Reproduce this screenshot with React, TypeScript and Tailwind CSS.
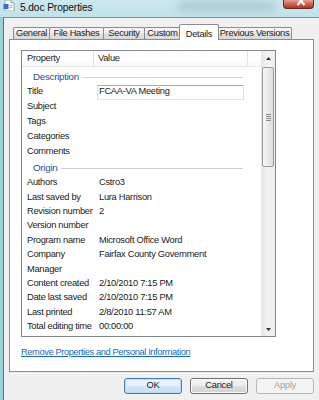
import React from "react";

const FONT = { fontFamily: '"Liberation Sans", Arial, sans-serif' };

const originRows: [string, string][] = [
  ["Authors", "Cstro3"],
  ["Last saved by", "Lura Harrison"],
  ["Revision number", "2"],
  ["Version number", ""],
  ["Program name", "Microsoft Office Word"],
  ["Company", "Fairfax County Government"],
  ["Manager", ""],
  ["Content created", "2/10/2010 7:15 PM"],
  ["Date last saved", "2/10/2010 7:15 PM"],
  ["Last printed", "2/8/2010 11:57 AM"],
  ["Total editing time", "00:00:00"],
];

const descRows = ["Subject", "Tags", "Categories", "Comments"];

function Row({ label, value, h }: { label: string; value: string; h: string }) {
  return (
    <div className={`flex items-center ${h}`}>
      <div className="w-[72px] pl-[5px] whitespace-nowrap">{label}</div>
      <div className="pl-[5px] whitespace-nowrap">{value}</div>
    </div>
  );
}

function Group({ label, cls }: { label: string; cls: string }) {
  return (
    <div className={`flex items-center ${cls}`}>
      <div className="pl-[11px] text-[#2b4c9c] text-[9.8px] whitespace-nowrap">{label}</div>
      <div className="flex-1 h-px bg-[#c9d0e2] ml-[4px] mr-[18px]" />
    </div>
  );
}

function Tab({ label, cls, selected }: { label: string; cls: string; selected?: boolean }) {
  if (selected) {
    return (
      <div
        className={`relative z-10 h-[16px] flex justify-center pt-[3px] bg-white border border-b-0 border-[#898c95] rounded-t-[2px] ${cls}`}
      >
        {label}
      </div>
    );
  }
  return (
    <div
      className={`h-[12px] mb-px flex items-center justify-center border border-b-0 border-[#898c95] rounded-t-[2px] bg-[linear-gradient(#f6f6f6,#efefef_50%,#e3e3e3_50%,#d8d8d8)] ${cls}`}
    >
      {label}
    </div>
  );
}

export default function App() {
  return (
    <div
      className="w-[319px] h-[400px] overflow-hidden flex flex-col text-[9.3px] tracking-[-0.28px] text-[#1a1a1a] bg-[#a9dbe2]"
      style={FONT}
    >
      {/* Title bar */}
      <div className="h-[17px] flex items-start bg-[linear-gradient(#cbe8ee,#bfe2e9)]">
        <svg width="12" height="11" viewBox="0 0 12 11" className="ml-[3px] mt-0">
          <path d="M2 0 H8 L11 3 V11 H2 Z" fill="#fbfbfb" stroke="#8d9aa6" strokeWidth="0.8" />
          <path d="M8 0 V3 H11" fill="#e6ecf2" stroke="#8d9aa6" strokeWidth="0.8" />
          <rect x="0.5" y="4" width="5" height="5" fill="#3b6fc4" />
          <rect x="6.5" y="5" width="3" height="0.8" fill="#9aa8b8" />
          <rect x="6.5" y="7" width="3" height="0.8" fill="#9aa8b8" />
        </svg>
        <div className="ml-[5px] mt-[2px] text-[10.2px] tracking-[-0.1px] text-[#111] leading-[11px]">
          5.doc Properties
        </div>
        <div className="flex-1 flex justify-end pr-[6px]">
          <div className="w-[100px] h-[10px] mt-[1px] rounded-full bg-[#9fb9c1] blur-[4px] opacity-60" />
        </div>
        <div className="w-[31px] h-[9px] mr-[5px] rounded-b-[4px] border border-t-0 border-[#6a241b] bg-[linear-gradient(#e6a092,#d06a59_45%,#b3331f)] flex justify-center overflow-hidden">
          <svg width="10" height="8" viewBox="0 0 10 8" className="ml-[4px]">
            <path d="M1.5 -3 L8.5 5 M8.5 -3 L1.5 5" stroke="#ffffff" strokeWidth="2" />
          </svg>
        </div>
      </div>

      {/* Frame + body */}
      <div className="flex-1 flex">
        <div className="w-[3px] bg-[#98d3dc]" />
        <div className="w-px bg-[#5d7378]" />
        <div className="flex-1 bg-[#f0f0f0] border-t border-[#7f949a] flex flex-col pt-[6px]">
          {/* Tabs */}
          <div className="relative z-10 h-[16px] flex items-end pl-[9px]">
            <Tab label="General" cls="w-[37px]" />
            <Tab label="File Hashes" cls="w-[55px] -ml-px" />
            <Tab label="Security" cls="w-[42px] -ml-px" />
            <Tab label="Custom" cls="w-[37px] -ml-px" />
            <Tab label="Details" cls="w-[40px] -ml-[2px]" selected />
            <Tab label="Previous Versions" cls="w-[75px] -ml-[2px]" />
          </div>

          {/* Panel */}
          <div className="-mt-px ml-[5px] w-[305px] h-[333px] bg-white border border-[#898c95] pt-[10px] pl-[11px] flex flex-col">
            {/* List view */}
            <div className="w-[255px] h-[287px] border border-[#828790] flex overflow-hidden">
              <div className="flex-1 flex flex-col overflow-hidden">
                {/* Header */}
                <div className="h-[16px] shrink-0 flex border-b border-[#e8e8e8] bg-[linear-gradient(#ffffff,#ffffff_60%,#f6f7f9)]">
                  <div className="w-[72px] pl-[5px] pt-[1px] flex items-center border-r border-[#e2e3e6]">Property</div>
                  <div className="w-[154px] pl-[4px] pt-[1px] flex items-center border-r border-[#e2e3e6]">Value</div>
                  <div className="flex-1" />
                </div>
                <Group label="Description" cls="h-[17px] shrink-0 pt-[3px]" />
                <div className="h-[16px] shrink-0 flex items-center">
                  <div className="w-[72px] pl-[5px]">Title</div>
                  <div className="ml-[3px] w-[147px] h-[15px] border border-[#abadb3] border-l-[#dbdfe6] border-r-[#dbdfe6] border-b-[#e3e9ef] pl-[1px] flex items-center">
                    FCAA-VA Meeting
                  </div>
                </div>
                {descRows.map((l) => (
                  <Row key={l} label={l} value="" h="h-[14.75px] shrink-0" />
                ))}
                <Group label="Origin" cls="h-[17px] shrink-0 pt-[1px]" />
                {originRows.map(([l, v]) => (
                  <Row key={l} label={l} value={v} h="h-[14.4px] shrink-0" />
                ))}
              </div>
              {/* Scrollbar */}
              <div className="w-[14px] flex flex-col bg-[linear-gradient(90deg,#e6e6e6,#f3f3f3_40%,#eeeeee)] border-l border-[#e6e6e6]">
                <div className="h-[15px] shrink-0 flex items-center justify-center">
                  <svg width="5" height="3" viewBox="0 0 5 3">
                    <path d="M0 3 L2.5 0 L5 3 Z" fill="#333" />
                  </svg>
                </div>
                <div className="h-[100px] shrink-0 mt-px mr-px rounded-[2px] border border-[#9b9b9b] bg-[linear-gradient(90deg,#f7f7f7,#ececec_45%,#dcdcdc)] flex flex-col items-center justify-center gap-[1px]">
                  <div className="w-[5px] h-px bg-[#8a8a8a]" />
                  <div className="w-[5px] h-px bg-[#8a8a8a]" />
                  <div className="w-[5px] h-px bg-[#8a8a8a]" />
                  <div className="w-[5px] h-px bg-[#8a8a8a]" />
                </div>
                <div className="flex-1" />
                <div className="h-[15px] shrink-0 flex items-center justify-center pt-[2px]">
                  <svg width="5" height="3" viewBox="0 0 5 3">
                    <path d="M0 0 L5 0 L2.5 3 Z" fill="#333" />
                  </svg>
                </div>
              </div>
            </div>
            <div className="mt-[9px] text-[#1a66c4] underline leading-[12px] tracking-[-0.4px]">
              Remove Properties and Personal Information
            </div>
          </div>

          {/* Buttons */}
          <div className="mt-[6px] w-[310px] flex justify-end gap-[8px]">
            <div className="w-[58px] h-[16px] rounded-[3px] border border-[#3c7fb1] bg-[linear-gradient(#eef6fb,#e4eff7_50%,#d3e6f3_50%,#c6dff0)] flex items-center justify-center shadow-[inset_0_0_0_1px_#b6e0f6]">
              OK
            </div>
            <div className="w-[58px] h-[16px] rounded-[3px] border border-[#707070] bg-[linear-gradient(#f4f4f4,#ececec_50%,#dfdfdf_50%,#d3d3d3)] flex items-center justify-center shadow-[inset_0_0_0_1px_#fbfbfb]">
              Cancel
            </div>
            <div className="w-[58px] h-[16px] rounded-[3px] border border-[#b5b9bc] bg-[#f4f4f4] flex items-center justify-center text-[#a3a3a3]">
              Apply
            </div>
          </div>
        </div>
      </div>
    </div>
  );
}
